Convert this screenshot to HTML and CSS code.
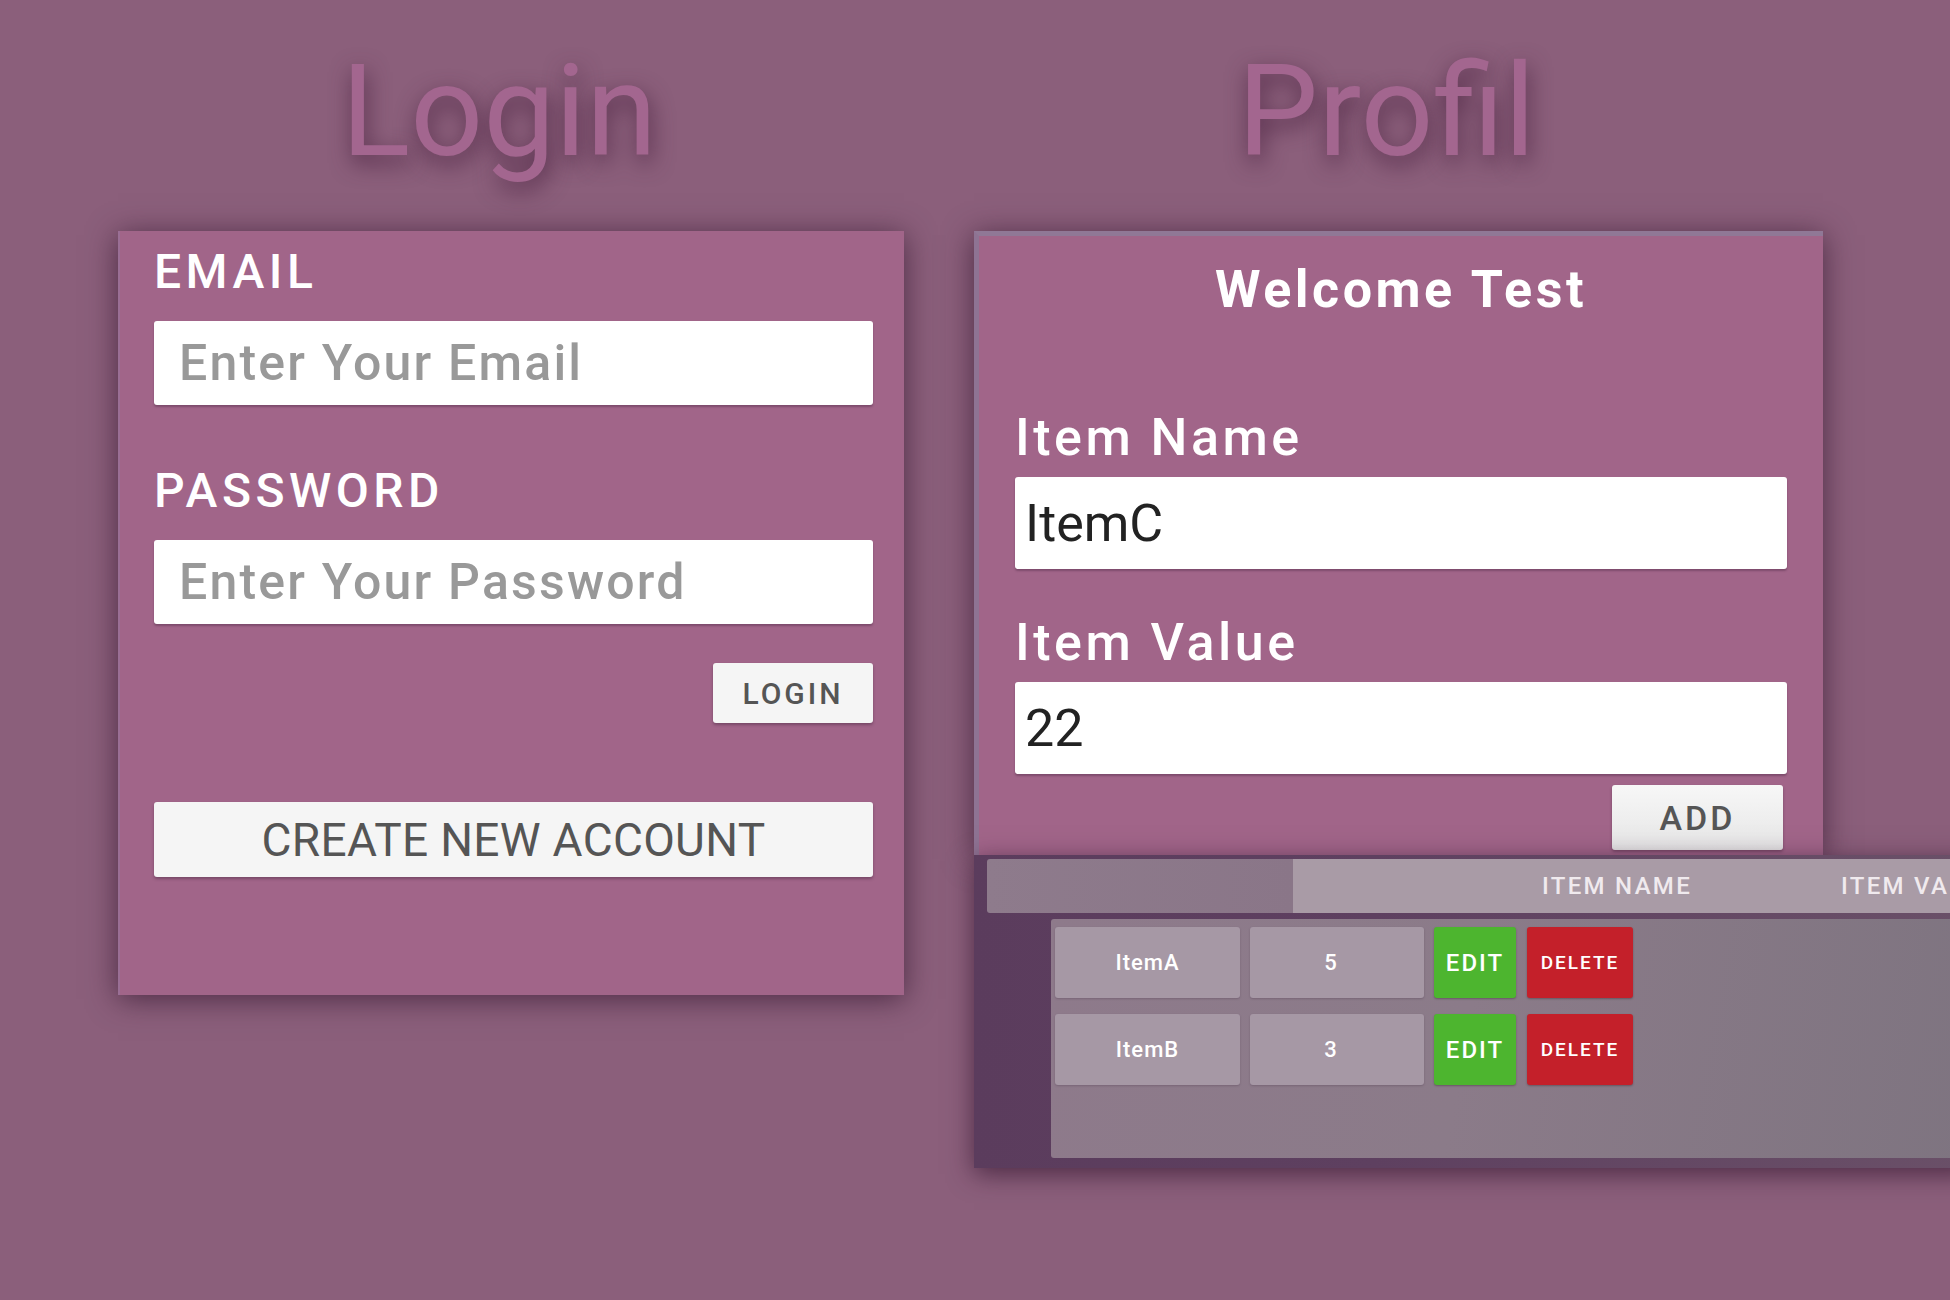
FILE: index.html
```html
<!DOCTYPE html>
<html lang="en">
<head>
<meta charset="utf-8">
<title>Login / Profil</title>
<link rel="stylesheet" href="styles.css">
</head>
<body>
<main class="page">
  <section class="col col-login">
    <h1 class="title">Login</h1>
    <div class="card login-card">
      <div class="field-label">EMAIL</div>
      <div class="input login-input placeholder">Enter Your Email</div>
      <div class="field-label label-gap">PASSWORD</div>
      <div class="input login-input placeholder">Enter Your Password</div>
      <div class="btn-row">
        <div class="btn btn-login">LOGIN</div>
      </div>
      <div class="btn btn-create">CREATE NEW ACCOUNT</div>
    </div>
  </section>

  <section class="col col-profile">
    <h1 class="title">Profil</h1>
    <div class="card profile-card">
      <div class="welcome">Welcome Test</div>
      <div class="item-label first">Item Name</div>
      <div class="input item-input">ItemC</div>
      <div class="item-label">Item Value</div>
      <div class="input item-input">22</div>
      <div class="btn-row">
        <div class="btn btn-add">ADD</div>
      </div>
    </div>
    <div class="table-panel">
      <div class="table-head">
        <div class="head-dark"></div>
        <div class="head-light">
          <span class="head-cell name">ITEM NAME</span>
          <span class="head-cell value">ITEM VALUE</span>
        </div>
      </div>
      <div class="table-body">
        <div class="row">
          <div class="cell cell-name">ItemA</div>
          <div class="cell cell-value">5</div>
          <div class="act act-edit">EDIT</div>
          <div class="act act-delete">DELETE</div>
        </div>
        <div class="row">
          <div class="cell cell-name">ItemB</div>
          <div class="cell cell-value">3</div>
          <div class="act act-edit">EDIT</div>
          <div class="act act-delete">DELETE</div>
        </div>
      </div>
    </div>
  </section>
</main>
</body>
</html>
```

FILE: styles.css
```css
html, body {
  margin: 0;
  padding: 0;
}
body {
  width: 1950px;
  height: 1300px;
  overflow: hidden;
  background: #8b5f7b;
  font-family: Roboto, "Liberation Sans", Arial, sans-serif;
}
.page {
  display: flex;
  gap: 70px;
  padding: 47px 0 0 118px;
  box-sizing: border-box;
}
.col-login { width: 786px; flex: none; }
.col-profile { width: 849px; flex: none; }

.title {
  margin: 0 0 56px 0;
  padding-right: 24px;
  height: 128px;
  font-size: 128px;
  line-height: 128px;
  font-weight: 400;
  text-align: center;
  color: #a3668f;
  text-shadow: 2px 8px 22px rgba(70, 30, 60, 0.8);
}

.card {
  background: #a16589;
  box-sizing: border-box;
  box-shadow: 0 4px 28px rgba(55, 25, 50, 0.75);
}

/* Login card */
.login-card {
  height: 764px;
  padding: 11px 31px 0 34px;
  border-left: 2px solid #9a6f95;
}
.field-label {
  height: 60px;
  font-size: 48px;
  line-height: 60px;
  font-weight: 500;
  letter-spacing: 4.5px;
  color: #ffffff;
}
.label-gap { margin-top: 56px; }
.input {
  background: #ffffff;
  border-radius: 3px;
  box-shadow: 0 2px 2px rgba(60, 30, 55, 0.35);
  display: flex;
  align-items: center;
  box-sizing: border-box;
}
.login-input {
  height: 84px;
  margin-top: 19px;
  padding-left: 25px;
  font-size: 50px;
  font-weight: 500;
  letter-spacing: 2.2px;
}
.placeholder { color: #999999; }

.btn-row {
  display: flex;
  justify-content: flex-end;
}
.btn {
  background: #f5f5f5;
  border-radius: 3px;
  box-shadow: 0 2px 3px rgba(60, 30, 55, 0.4);
  display: flex;
  align-items: center;
  justify-content: center;
  color: #555555;
  box-sizing: border-box;
}
.btn-login {
  margin-top: 39px;
  width: 160px;
  height: 60px;
  font-size: 30px;
  font-weight: 500;
  letter-spacing: 3px;
}
.btn-create {
  margin-top: 79px;
  height: 75px;
  font-size: 46px;
  font-weight: 400;
  letter-spacing: 0.3px;
}

/* Profile card */
.profile-card {
  border-left: 5px solid #8e7393;
  border-top: 5px solid #907896;
  padding: 22px 36px 5px 36px;
  position: relative;
}
.welcome {
  height: 64px;
  font-size: 52px;
  line-height: 64px;
  font-weight: 700;
  letter-spacing: 3.5px;
  text-align: center;
  color: #ffffff;
}
.item-label {
  margin-top: 42px;
  height: 64px;
  font-size: 52px;
  line-height: 64px;
  font-weight: 500;
  letter-spacing: 3.5px;
  color: #ffffff;
}
.item-label.first { margin-top: 84px; }
.item-input {
  margin-top: 7px;
  height: 92px;
  padding-left: 10px;
  font-size: 52px;
  color: #222222;
}
.btn-add {
  margin-top: 11px;
  margin-right: 4px;
  width: 171px;
  height: 65px;
  font-size: 34px;
  font-weight: 500;
  letter-spacing: 3px;
  background: linear-gradient(#f7f7f7, #e6e6e6);
}

/* Table panel */
.table-panel {
  position: relative;
  width: 1000px;
  height: 313px;
  box-sizing: border-box;
  padding: 4px 0 10px 0;
  background: linear-gradient(90deg, #5b3c5d 0%, #5e4060 40%, #6a5068 100%);
  box-shadow: 0 6px 24px rgba(50, 20, 45, 0.7);
}
.table-head {
  display: flex;
  height: 54px;
  margin-left: 13px;
}
.head-dark {
  flex: none;
  width: 306px;
  background: linear-gradient(90deg, #8e7b8c, #8a7688);
  border-radius: 3px 0 0 3px;
}
.head-light {
  flex: 1;
  min-width: 0;
  background: #a99ba6;
  display: flex;
  align-items: center;
  padding-left: 249px;
  gap: 149px;
  overflow: hidden;
}
.head-cell {
  flex: none;
  font-size: 24px;
  font-weight: 500;
  letter-spacing: 2.3px;
  color: #f0eaee;
  white-space: nowrap;
}
.table-body {
  margin: 6px 0 0 77px;
  height: 239px;
  box-sizing: border-box;
  padding: 8px 0 0 4px;
  border-radius: 3px;
  background: linear-gradient(100deg, #8e7a8b 0%, #8b7b89 45%, #7e7480 100%);
  display: flex;
  flex-direction: column;
  gap: 16px;
}
.row {
  display: flex;
  height: 71px;
}
.cell {
  background: #a698a5;
  border-radius: 3px;
  display: flex;
  align-items: center;
  justify-content: center;
  color: #ffffff;
  font-size: 22px;
  font-weight: 500;
  letter-spacing: 1px;
  box-shadow: 0 1px 2px rgba(60, 40, 60, 0.25);
}
.cell-name { width: 185px; }
.cell-value { width: 174px; margin-left: 10px; padding-right: 12px; box-sizing: border-box; }
.act {
  border-radius: 3px;
  display: flex;
  align-items: center;
  justify-content: center;
  color: #ffffff;
  font-weight: 500;
  box-shadow: 0 1px 2px rgba(40, 20, 30, 0.35);
}
.act-edit {
  width: 82px;
  margin-left: 10px;
  background: #4db52f;
  font-size: 24px;
  letter-spacing: 2px;
}
.act-delete {
  width: 106px;
  margin-left: 11px;
  background: #c4202a;
  font-size: 19px;
  letter-spacing: 2px;
}
```
